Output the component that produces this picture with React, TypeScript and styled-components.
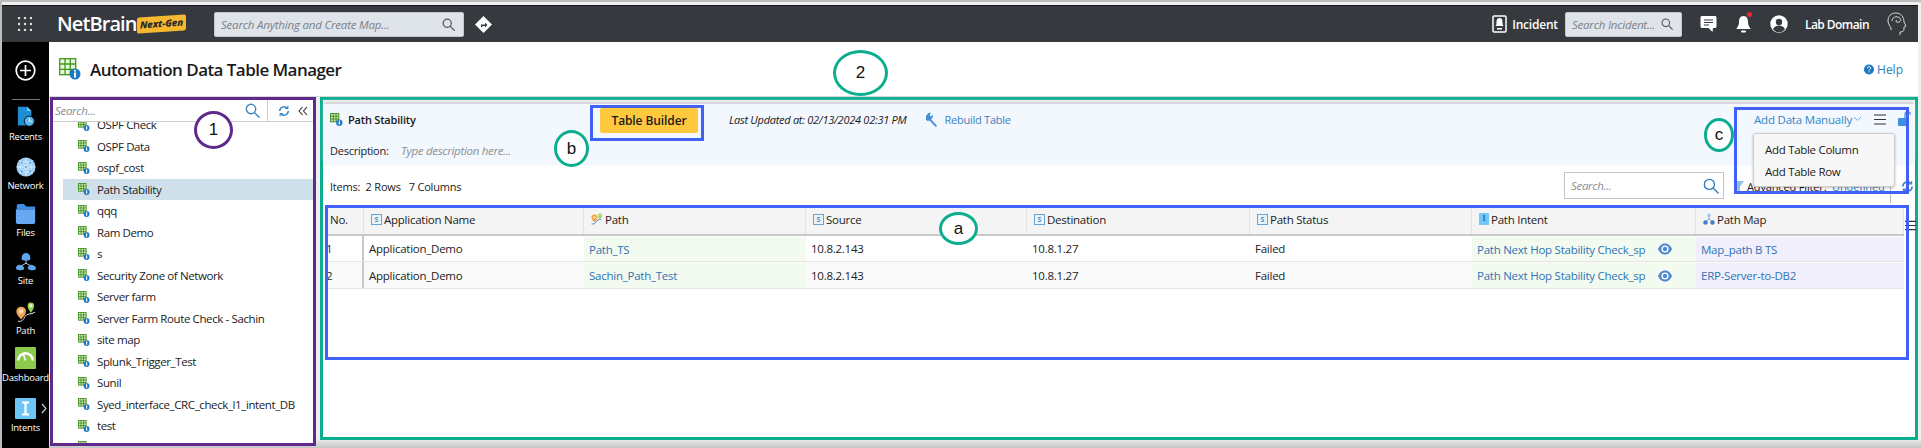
import React from "react";
import styled, { createGlobalStyle } from "styled-components";

const Global = createGlobalStyle`
  html, body { margin: 0; padding: 0; background: #efefef; overflow: hidden; }
  * { box-sizing: border-box; }
  body { font-family: "Open Sans", "Noto Sans", sans-serif; }
`;

const Page = styled.div`
  position: relative; width: 1921px; height: 448px; overflow: hidden;
  background: linear-gradient(#efefef, #efefef 438px, #c6c6c6 448px);
  padding: 5px 3px 0 2px; 
  &::before { content: ""; position: absolute; left: 0; right: 0; top: 0; height: 2px; background: #bdbdbd; }
  &::after { content: ""; position: absolute; left: 0; top: 0; bottom: 0; width: 2px; background: #bdbdbd; }
`;
const TopBar = styled.header`
  height: 37px; background: #363a3e; border-top: 1px solid #14171a; display: flex; align-items: center; color: #fff; padding-left: 16px;
`;
const Logo = styled.div`
  display: flex; align-items: center; margin-left: 25px; margin-right: 14px; width: 143px;
`;
const LogoWord = styled.span`
  font: 600 20px/1 "Open Sans", sans-serif; letter-spacing: -.9px; color: #fff; width: 80px; white-space: nowrap;
`;
const LogoBadge = styled.span`
  font: italic 800 9.5px/16px "Open Sans", sans-serif; color: #2b2b2b; background: #f5b82e; transform: skewY(-4deg); border-radius: 2px; white-space: nowrap; width: 49px; text-align: center; letter-spacing: -.1px;
`;
const TopSearch = styled.div<{ $w: number }>`
  width: ${p => p.$w}px; height: 25px; background: #dfe4ea; border-radius: 2px; border: 1px solid #c3c8ce; display: flex; align-items: center; justify-content: space-between; padding: 0 8px 0 6px; flex: none;
  font: italic 11.5px "Open Sans", sans-serif; color: #7b8188; letter-spacing: -.2px; white-space: nowrap;
`;
const Spacer = styled.div`flex: 1;`;
const EndGap = styled.div`flex: 0 0 11px;`;
const IncidentLabel = styled.span`font: 600 12px "Open Sans", sans-serif; margin: 0 7px 0 5px; letter-spacing: -.2px;`;
const TopIcon = styled.span<{ $ml: number }>`position: relative; display: inline-flex; margin-left: ${p => p.$ml}px;`;
const Dot = styled.span`position: absolute; width: 5px; height: 5px; border-radius: 50%; background: #f3232f; top: -3px; right: -1px;`;
const DomainLabel = styled.span`font: 600 12px "Open Sans", sans-serif; margin-left: 17px; letter-spacing: -.55px; white-space: nowrap;`;

const Body = styled.div`display: flex; height: 406px;`;
const Side = styled.nav`
  width: 47px; background: #000; color: #fff; display: flex; flex-direction: column; align-items: center; flex: none;
`;
const PlusWrap = styled.div`height: 57px; padding-top: 18px; width: 100%; display: flex; justify-content: center; border-bottom: 0;`;
const SideRule = styled.div`width: 28px; height: 1px; background: #777; flex: none; margin-bottom: 3px;`;
const SideItem = styled.div<{ $h: number }>`
  position: relative; height: ${p => p.$h}px; flex: none; width: 100%; display: flex; flex-direction: column; align-items: center; justify-content: flex-end;
`;
const SideLabel = styled.span`font: 400 9.5px/14px "Open Sans", sans-serif; color: #fff; letter-spacing: -.25px; white-space: nowrap; margin-top: 2px;`;
const SideArrow = styled.span`position: absolute; right: 2px; top: 18px; display: inline-flex;`;

const Main = styled.main`flex: 1; display: flex; flex-direction: column; min-width: 0;`;
const TitleBar = styled.div`
  height: 55px; background: #fff; display: flex; align-items: center; padding: 0 15px 0 10px; border-bottom: 1px solid #d8d8d8;
`;
const Title = styled.h1`
  font: 600 17px "Open Sans", sans-serif; margin: 0 0 0 9px; color: #1a1a1a; letter-spacing: -.55px; white-space: nowrap; flex: 1;
`;
const Help = styled.span`display: flex; align-items: center; gap: 3px; font: 400 12px "Open Sans", sans-serif; color: #2c7fb8;`;

const Content = styled.div`display: flex; flex: 1; min-height: 0; gap: 4px; margin-left: 1px;`;
const Left = styled.aside`
  width: 266px; height: 349px; flex: none; background: #fff; border: 3px solid #5f2a8c; display: flex; flex-direction: column; overflow: hidden;
`;
const LeftSearch = styled.div`
  height: 22px; flex: none; display: flex; align-items: center; border-bottom: 1px solid #ccc; background: #fff; position: relative; z-index: 1;
`;
const ItalicHint = styled.span<{ $flex?: boolean }>`
  font: italic 11.5px "Open Sans", sans-serif; color: #8a8f94; letter-spacing: -.3px; white-space: nowrap; ${p => p.$flex ? "flex: 1;" : ""}
`;
const LeftSearchInner = styled.div`flex: 1; height: 100%; display: flex; align-items: center; padding: 0 7px 0 2px; border-right: 1px solid #ccc;`;
const LeftTools = styled.div`width: 45px; flex: none; display: flex; align-items: center; justify-content: space-between; padding: 0 5px 0 10px;`;
const List = styled.div`margin-top: -8px; padding-left: 10px; flex: 1;`;
const ListRow = styled.div<{ $on?: boolean }>`
  height: 21.5px; display: flex; align-items: center; gap: 7px; padding-left: 15px; background: ${p => p.$on ? "#cfe0ea" : "transparent"};
  font: 400 11.5px "Open Sans", sans-serif; color: #222; letter-spacing: -.39px; white-space: nowrap;
`;

const Right = styled.section`
  width: 1598px; height: 343px; flex: none; background: #fff; border: 3px solid #0aae8e; display: flex; flex-direction: column; position: relative;
`;
const Banner = styled.div`
  height: 61px; margin-top: 4px; background: #f3f7fe; padding: 0 0 0 7px; position: relative; flex: none;
  box-shadow: 0 -4px 3px -1px #d2d4d8;
`;
const BannerTop = styled.div`height: 31px; display: flex; align-items: center; position: relative;`;
const TableName = styled.span`font: 600 11px "Open Sans", sans-serif; color: #1a1a1a; margin-left: 5px; letter-spacing: -.2px; width: 252px; white-space: nowrap;`;
const BuilderButton = styled.button`
  width: 98px; height: 25px; border: 0; border-radius: 2px; background: #ffc83d; color: #1b1b1b; font: 600 12px "Open Sans", sans-serif; padding: 0; letter-spacing: -.1px; margin-top: 2px;
`;
const Updated = styled.span`font: italic 11px "Open Sans", sans-serif; color: #1a1a1a; margin-left: 31px; letter-spacing: -.27px; white-space: nowrap;`;
const Rebuild = styled.span`display: flex; align-items: center; gap: 6px; margin-left: 19px; font: 400 11px "Open Sans", sans-serif; color: #3b80c4; letter-spacing: -.25px; white-space: nowrap;`;
const ActionGroup = styled.div`position: absolute; left: 1424px; top: 0; width: 160px; height: 30px; display: flex; align-items: center;`;
const AddData = styled.span`font: 400 11.5px "Open Sans", sans-serif; color: #2f86c9; white-space: nowrap; letter-spacing: -.2px; width: 99px;`;
const ActionGap = styled.span`width: 12px; flex: none;`;
const Menu = styled.div`
  position: absolute; left: -1px; top: 29px; width: 142px; height: 54px; background: #f7f7f7; border: 1px solid #cfcfcf; border-radius: 3px; box-shadow: 0 1px 3px rgba(0,0,0,.25); padding: 5px 0 0 11px; z-index: 3;
`;
const MenuItem = styled.div`font: 400 11.5px/21.5px "Open Sans", sans-serif; color: #1a1a1a; letter-spacing: -.3px; white-space: nowrap;`;
const DescRow = styled.div`display: flex; align-items: center; height: 18px; margin-top: 6px;`;
const DescLabel = styled.span`font: 400 11px "Open Sans", sans-serif; color: #222; letter-spacing: -.25px; width: 71px;`;

const ItemsBar = styled.div`height: 42px; flex: none; display: flex; align-items: center; padding-left: 7px; position: relative;`;
const Items = styled.span`font: 400 11px "Open Sans", sans-serif; color: #222; letter-spacing: -.2px; white-space: pre; flex: none; width: 1234px;`;
const GridSearch = styled.div`
  width: 160px; height: 27px; border: 1px solid #c4c4c4; background: #fff; display: flex; align-items: center; padding: 0 4px 0 6px; flex: none; margin-top: -1px;
`;
const Filter = styled.span`display: flex; align-items: center; gap: 3px; margin-left: 9px; font: 400 11px "Open Sans", sans-serif; color: #1a1a1a; letter-spacing: -.15px; white-space: nowrap; flex: none;`;
const Undefined = styled.span`color: #2f7fc0;`;
const Divider = styled.span`width: 1px; height: 26px; background: #bbb; margin-left: 5px; flex: none; margin-top: 8px;`;
const RefreshBox = styled.span`display: inline-flex; margin-left: 10px;`;

const TableBox = styled.div`margin-left: 3px; position: relative;`;
const Row = styled.div<{ $head?: boolean; $alt?: boolean }>`
  display: grid; grid-template-columns: 38px 220px 222px 221px 223px 222px 224px 208px;
  height: ${p => p.$head ? 29 : p.$alt ? 27 : 26}px;
  background: ${p => p.$head ? "#f4f4f4" : p.$alt ? "#fafafa" : "#fff"};
  border-bottom: ${p => p.$head ? "2px solid #c8c8c8" : "1px solid #e6e6e6"};
  width: 1578px;
`;
const HeadCell = styled.div<{ $pad?: number }>`
  display: flex; align-items: center; gap: 2px; padding: 0 0 3px ${p => p.$pad ?? 7}px; border-right: 1px solid #e2e2e2;
  font: 400 11.5px "Open Sans", sans-serif; color: #222; letter-spacing: -.25px; white-space: nowrap;
`;
const Cell = styled.div<{ $tone?: string; $link?: boolean; $pad?: number; $edge?: boolean }>`
  display: flex; align-items: center; padding-left: ${p => p.$pad ?? 5}px; background: ${p => p.$tone ?? "transparent"}; margin-top: ${p => p.$tone ? "1px" : 0};
  color: ${p => p.$link ? "#2f74b5" : "#222"}; font: 400 11.5px "Open Sans", sans-serif; letter-spacing: -.25px; white-space: nowrap; overflow: hidden;
  ${p => p.$edge ? "border-right: 2px solid #c8c8c8;" : ""}
`;
const TypeS = styled.span`
  width: 11px; height: 11px; border: 1px solid #6aa3cf; background: #eaf3fa; color: #4d8cc0; font: 700 7px/9px "Open Sans", sans-serif; text-align: center; display: inline-block; flex: none; letter-spacing: 0;
`;
const TypeI = styled.span`
  width: 10px; height: 12px; background: #73c9f5; color: #1d6ea8; font: 700 8px/12px "Liberation Serif", serif; text-align: center; display: inline-block; flex: none;
`;
const EyeSlot = styled.span`display: inline-flex; margin-left: 13px;`;
const ColMenu = styled.span`position: absolute; left: 1579px; top: 13px; display: inline-flex;`;

const Callout = styled.div<{ $x: number; $y: number; $w: number; $h: number }>`
  position: absolute; left: ${p => p.$x}px; top: ${p => p.$y}px; width: ${p => p.$w}px; height: ${p => p.$h}px; border: 3px solid #4060f6; z-index: 5; pointer-events: none;
`;
const Bubble = styled.div<{ $x: number; $y: number; $w: number; $h: number; $c: string }>`
  position: absolute; left: ${p => p.$x}px; top: ${p => p.$y}px; width: ${p => p.$w}px; height: ${p => p.$h}px; border: 3px solid ${p => p.$c}; border-radius: 50%; background: #fff; z-index: 6;
  display: flex; align-items: center; justify-content: center; font: 400 17px "Liberation Sans", sans-serif; color: #111;
`;

const TableIcon = ({ s = 12 }: { s?: number }) => (
  <svg width={s} height={s} viewBox="0 0 14 14" style={{ flex: "none" }}>
    <g fill="none" stroke="#3f8f1e" strokeWidth="1"><rect x=".5" y=".5" width="9" height="9" fill="#cfe8b8" /><path d="M3.5.5v9M6.5.5v9M.5 3.5h9M.5 6.5h9" /></g>
    <circle cx="10" cy="10.5" r="3.4" fill="#1f78c1" /><rect x="9.4" y="9.2" width="1.3" height="3.3" fill="#fff" /><rect x="9.4" y="7.9" width="1.3" height="1" fill="#fff" />
  </svg>
);
const Glass = ({ s = 14, c = "#555", w = 1.3 }: { s?: number; c?: string; w?: number }) => (
  <svg width={s} height={s} viewBox="0 0 14 14" fill="none" stroke={c} strokeWidth={w} style={{ flex: "none" }}><circle cx="5.6" cy="5.6" r="4.4" /><path d="M9 9l4.2 4.2" strokeLinecap="round" /></svg>
);
const Refresh = ({ s = 12 }: { s?: number }) => (
  <svg width={s} height={s} viewBox="0 0 14 14" fill="none" stroke="#2f86c9" strokeWidth="1.7"><path d="M2 7a5 5 0 0 1 8.6-3.4" /><path d="M12 7a5 5 0 0 1-8.6 3.4" /><path d="M11.5 1v3.2H8.3" strokeWidth="1.2" /><path d="M2.5 13V9.8h3.2" strokeWidth="1.2" /></svg>
);
const Burger = ({ w = 12 }: { w?: number }) => (
  <svg width={w} height="11" viewBox="0 0 12 11" stroke="#333" strokeWidth="1.1" style={{ flex: "none" }}><path d="M0 1h12M0 5.500h12M0 10h12" /></svg>
);
const PathGlyph = ({ s = 12 }: { s?: number }) => (
  <svg width={s} height={s} viewBox="0 0 24 24"><path d="M1 22c5 1 8-2 11-6s5-3 8-4" fill="none" stroke="#4d94d6" strokeWidth="2" /><path d="M7 19c-3-4-6-6-6-10a6 6 0 0 1 12 0c0 4-3 6-6 10z" fill="#f2a24a" /><circle cx="7" cy="9" r="2.6" fill="#fde3bf" /><path d="M18 12c-2-3-4-4-4-7a4 4 0 0 1 8 0c0 3-2 4-4 7z" fill="#8fce42" /><circle cx="18" cy="5" r="1.8" fill="#e4f5cc" /></svg>
);
const TreeGlyph = ({ s = 12 }: { s?: number }) => (
  <svg width={s} height={s} viewBox="0 0 12 12"><path d="M6 3v3M6 6L2.500 9M6 6l3.500 3" stroke="#8aa4bf" fill="none" /><circle cx="6" cy="2.500" r="2" fill="#a8cdee" /><circle cx="2.500" cy="9.500" r="2.200" fill="#3d7fca" /><circle cx="9.500" cy="9.500" r="2.200" fill="#3d7fca" /></svg>
);
const Eye = () => (
  <svg width="14" height="14" viewBox="0 0 14 14"><path d="M0 7c2-4 4-5.500 7-5.500S12 3 14 7c-2 4-4 5.500-7 5.500S2 11 0 7z" fill="#4f88d0" /><circle cx="7" cy="7" r="3.600" fill="#fff" /><circle cx="7" cy="7" r="2.200" fill="#4f88d0" /></svg>
);

const items = ["OSPF Check", "OSPF Data", "ospf_cost", "Path Stability", "qqq", "Ram Demo", "s", "Security Zone of Network", "Server farm", "Server Farm Route Check - Sachin", "site map", "Splunk_Trigger_Test", "Sunil", "Syed_interface_CRC_check_l1_intent_DB", "test", "test(1)"];

const rows = [
  { n: "1", path: "Path_TS", map: "Map_path B TS" },
  { n: "2", path: "Sachin_Path_Test", map: "ERP-Server-to-DB2" },
];

const nav: { label: string; h: number; icon: React.ReactNode; arrow?: boolean }[] = [
  { label: "Recents", h: 41, icon: <svg width="21" height="22" viewBox="0 0 24 26"><path d="M3 1h11l5 5v17H3z" fill="#1f8fd4" /><path d="M14 1l5 5h-5z" fill="#7cc7f1" /><circle cx="16.500" cy="18" r="6" fill="#5cb6ec" stroke="#000" /><path d="M16.500 14.500V18h3" stroke="#fff" fill="none" /></svg> },
  { label: "Network", h: 49, icon: <svg width="20" height="20" viewBox="0 0 24 24"><circle cx="12" cy="12" r="11.500" fill="#9dcdf3" /><g stroke="#e3f1fc" strokeWidth="1" fill="none"><path d="M1 12h22M12 1v22M4 4l16 16M20 4L4 20" /><circle cx="12" cy="12" r="6.500" /></g><g fill="#4c97da"><circle cx="7" cy="7" r="1.100" /><circle cx="17" cy="7" r="1.100" /><circle cx="7" cy="17" r="1.100" /><circle cx="17" cy="17" r="1.100" /><circle cx="12" cy="12" r="1.100" /></g></svg> },
  { label: "Files", h: 47, icon: <svg width="21" height="21" viewBox="0 0 24 24"><path d="M2 3c0-1 1-2 2-2h6l3 3h9c.6 0 1 .4 1 1v2H2z" fill="#3d8de6" /><path d="M1 7h22v15c0 1-1 2-2 2H3c-1 0-2-1-2-2z" fill="#66a8f2" /></svg> },
  { label: "Site", h: 48, icon: <svg width="22" height="21" viewBox="0 0 26 24"><path d="M13 10v4M13 14l-7 4M13 14l7 4" stroke="#dbe8f5" fill="none" /><path d="M8 7a5 5 0 0 1 10 0c1 3-1 4-5 4s-6-1-5-4z" fill="#5da4e8" /><path d="M1 20c0-3 3-5 5.500-4s5 2 4 5c0 2-9 2-9.500-1z" fill="#5da4e8" /><path d="M15 20c0-3 3-5 5.500-4s5 2 4 5c0 2-9 2-9.500-1z" fill="#5da4e8" /></svg> },
  { label: "Path", h: 50, icon: <svg width="22" height="21" viewBox="0 0 26 26"><path d="M3 25c5 1 7-2 9-6s7-2 12-5" fill="none" stroke="#e8f0f8" strokeWidth="1.200" /><path d="M7 23c-3-4-6-6-6-10a6 6 0 0 1 12 0c0 4-3 6-6 10z" fill="#f0a152" /><circle cx="7" cy="13" r="3" fill="#fbd9b0" /><path d="M19 15c-2-4-4-5-4-9a4 4 0 0 1 8 0c0 4-2 5-4 9z" fill="#92d050" /><circle cx="19" cy="6" r="2.200" fill="#e2f4cd" /></svg> },
  { label: "Dashboard", h: 47, icon: <svg width="21" height="22" viewBox="0 0 20 21"><rect width="20" height="21" rx="1" fill="#8dcb4f" /><path d="M3 13a7 7 0 0 1 14 0" fill="none" stroke="#fff" strokeWidth="2.400" /><path d="M10 13L8 7" stroke="#fff" strokeWidth="1.500" /></svg> },
  { label: "Intents", h: 50, arrow: true, icon: <svg width="21" height="21" viewBox="0 0 21 21"><rect width="21" height="21" rx="1" fill="#6cc5f7" /><path d="M7 4.500h7M7 16.500h7M10.500 4.500v12" stroke="#fff" strokeWidth="2.200" /></svg> },
];

export default function App() {
  return (
    <Page>
      <Global />
      <TopBar>
        <svg width="14" height="14" viewBox="0 0 14 14" fill="#e4e6e8"><g>{[1, 7, 13].flatMap(x => [1, 7, 13].map(y => <circle key={`${x}${y}`} cx={x} cy={y} r="1.200" />))}</g></svg>
        <Logo><LogoWord>NetBrain</LogoWord><LogoBadge>Next-Gen</LogoBadge></Logo>
        <TopSearch $w={250}>Search Anything and Create Map...<Glass s={13} /></TopSearch>
        <TopIcon $ml={11}><svg width="17" height="17" viewBox="0 0 17 17"><path d="M8.500 0L17 8.500 8.500 17 0 8.500z" fill="#fff" /><path d="M6 11V8.500h4V6.500l2.500 2.500-2.500 2.500V10H7.500v1z" fill="#363a3e" /></svg></TopIcon>
        <Spacer />
        <svg width="15" height="20" viewBox="0 0 15 20"><rect x="1" y="2" width="13" height="16" rx="1" fill="none" stroke="#fff" strokeWidth="1.500" /><path d="M7.500 4c-3 0-3 3-3 5s-1 3-1 3h8s-1-1-1-3 0-5-3-5z" fill="#fff" /><rect x="5" y="14" width="5" height="1.500" fill="#fff" /></svg>
        <IncidentLabel>Incident</IncidentLabel>
        <TopSearch $w={117}>Search Incident...<Glass s={12} /></TopSearch>
        <TopIcon $ml={18}><svg width="17" height="18" viewBox="0 0 17 18"><path d="M2 1h13c.8 0 1.500.7 1.500 1.500v9c0 .8-.7 1.500-1.500 1.500h-2l-.5 4-4-4H2c-.8 0-1.500-.7-1.500-1.500v-9C.5 1.700 1.200 1 2 1z" fill="#fff" /><path d="M4 5h9M4 7.500h9M4 10h5" stroke="#363a3e" /></svg></TopIcon>
        <TopIcon $ml={19}><svg width="15" height="19" viewBox="0 0 15 19"><path d="M7.500 1C4 1 3 4 3 7c0 4-2.500 6-2.500 7h14c0-1-2.500-3-2.500-7 0-3-1-6-4.500-6z" fill="#fff" /><rect x="5" y="15.500" width="5" height="2" rx="1" fill="#fff" /></svg><Dot /></TopIcon>
        <TopIcon $ml={19}><svg width="18" height="18" viewBox="0 0 18 18"><circle cx="9" cy="9" r="8.700" fill="#fff" /><circle cx="9" cy="7" r="3.200" fill="#363a3e" /><path d="M3 14.500c1-3 3.500-4 6-4s5 1 6 4a8 8 0 0 1-12 0z" fill="#363a3e" /></svg></TopIcon>
        <DomainLabel>Lab Domain</DomainLabel>
        <TopIcon $ml={18}><svg width="20" height="25" viewBox="0 0 20 25" fill="none" stroke="#d5d7d9" strokeWidth="1"><path d="M13 23v-3c3 0 4-1 4-3v-2l2-1-2-4c0-5-3-9-8-9S1 4 1 9c0 3 2 5 3 7v2" /><path d="M5 9c0-3 3-5 6-4s4 4 1 5-4-1-2-2" /></svg></TopIcon>
        <EndGap />
      </TopBar>
      <Body>
        <Side>
          <PlusWrap><svg width="21" height="21" viewBox="0 0 21 21" fill="none" stroke="#fff" strokeWidth="1.700"><circle cx="10.500" cy="10.500" r="9.300" /><path d="M10.500 5v11M5 10.500h11" /></svg></PlusWrap>
          <SideRule />
          {nav.map(n => (
            <SideItem key={n.label} $h={n.h}>
              {n.icon}
              <SideLabel>{n.label}</SideLabel>
              {n.arrow && <SideArrow><svg width="6" height="11" viewBox="0 0 6 11" fill="none" stroke="#ccc" strokeWidth="1.200"><path d="M1 1l4 4.500L1 10" /></svg></SideArrow>}
            </SideItem>
          ))}
        </Side>
        <Main>
          <TitleBar>
            <svg width="22" height="22" viewBox="0 0 22 22" style={{ flex: "none" }}><g fill="#e9f5dd" stroke="#3f9a17" strokeWidth="1.300"><rect x=".7" y=".7" width="16" height="16" /><path d="M6 .7v16M11.300.7v16M.7 6h16M.7 11.300h16" /></g><circle cx="16" cy="16" r="5.500" fill="#1f78c1" /><rect x="15" y="14.500" width="2" height="5" fill="#fff" /><rect x="15" y="12" width="2" height="1.600" fill="#fff" /></svg>
            <Title>Automation Data Table Manager</Title>
            <Help><svg width="10" height="11" viewBox="0 0 10 11"><circle cx="5" cy="5.500" r="5" fill="#1f78c1" /><path d="M3.500 4.200c0-2 3.200-2 3.200-.1 0 1.200-1.700 1.200-1.700 2.500" stroke="#fff" fill="none" strokeWidth="1" /><rect x="4.500" y="7.300" width="1" height="1" fill="#fff" /></svg>Help</Help>
          </TitleBar>
          <Content>
            <Left>
              <LeftSearch>
                <LeftSearchInner><ItalicHint $flex>Search...</ItalicHint><Glass s={15} c="#3a85c4" /></LeftSearchInner>
                <LeftTools><Refresh /><svg width="10" height="10" viewBox="0 0 10 10" fill="none" stroke="#333" strokeWidth="1.100"><path d="M4.500 1L1 5l3.500 4M9 1L5.500 5 9 9" /></svg></LeftTools>
              </LeftSearch>
              <List>
                {items.map(t => <ListRow key={t} $on={t === "Path Stability"}><TableIcon />{t}</ListRow>)}
              </List>
            </Left>
            <Right>
              <Banner>
                <BannerTop>
                  <TableIcon s={13} />
                  <TableName>Path Stability</TableName>
                  <BuilderButton>Table Builder</BuilderButton>
                  <Updated>Last Updated at: 02/13/2024 02:31 PM</Updated>
                  <Rebuild><svg width="13" height="15" viewBox="0 0 13 15" fill="#4a8ed6"><path d="M1 3a3 3 0 0 1 4-2L3.500 3 5 4.500 6.800 3a3 3 0 0 1-2 4l6 6.500c.5.500-.8 1.700-1.300 1.200L3.500 8.500A3 3 0 0 1 1 3z" /></svg>Rebuild Table</Rebuild>
                  <ActionGroup>
                    <AddData>Add Data Manually</AddData>
                    <svg width="9" height="6" viewBox="0 0 9 6" fill="none" stroke="#7aa8cf" strokeWidth="1" style={{ flex: "none" }}><path d="M1 1l3.500 3.500L8 1" /></svg>
                    <ActionGap />
                    <Burger />
                    <ActionGap />
                    <svg width="13" height="16" viewBox="0 0 13 16" style={{ flex: "none" }}><path d="M7 7V3.500a2.700 2.700 0 0 1 5.400 0" fill="none" stroke="#3d8fe0" strokeWidth="1.300" /><rect y="7" width="9" height="8" rx="1" fill="#3d8fe0" /></svg>
                    <Menu><MenuItem>Add Table Column</MenuItem><MenuItem>Add Table Row</MenuItem></Menu>
                  </ActionGroup>
                </BannerTop>
                <DescRow><DescLabel>Description:</DescLabel><ItalicHint>Type description here...</ItalicHint></DescRow>
              </Banner>
              <ItemsBar>
                <Items>Items:  2 Rows   7 Columns</Items>
                <GridSearch><ItalicHint $flex>Search...</ItalicHint><Glass s={16} c="#2f7fc0" w={1.2} /></GridSearch>
                <Filter><svg width="11" height="11" viewBox="0 0 11 11" fill="#8cc3ea"><path d="M0 0h11L7 5.500V11L4 9V5.500z" /></svg>Advanced Filter:&nbsp;<Undefined>Undefined</Undefined></Filter>
                <Divider />
                <RefreshBox><Refresh s={13} /></RefreshBox>
              </ItemsBar>
              <TableBox>
                <Row $head>
                  <HeadCell $pad={4}>No.</HeadCell>
                  <HeadCell><TypeS>S</TypeS>Application Name</HeadCell>
                  <HeadCell><PathGlyph />Path</HeadCell>
                  <HeadCell><TypeS>S</TypeS>Source</HeadCell>
                  <HeadCell><TypeS>S</TypeS>Destination</HeadCell>
                  <HeadCell><TypeS>S</TypeS>Path Status</HeadCell>
                  <HeadCell><TypeI>I</TypeI>Path Intent</HeadCell>
                  <HeadCell><TreeGlyph />Path Map</HeadCell>
                </Row>
                {rows.map((r, i) => (
                  <Row key={r.n} $alt={i === 1}>
                    <Cell $edge $pad={0}>{r.n}</Cell>
                    <Cell>Application_Demo</Cell>
                    <Cell $tone="#f3faf0" $link>{r.path}</Cell>
                    <Cell>10.8.2.143</Cell>
                    <Cell>10.8.1.27</Cell>
                    <Cell>Failed</Cell>
                    <Cell $tone="#f3faf0" $link>Path Next Hop Stability Check_sp<EyeSlot><Eye /></EyeSlot></Cell>
                    <Cell $tone="#f0effb" $link>{r.map}</Cell>
                  </Row>
                ))}
                <ColMenu><Burger w={11} /></ColMenu>
              </TableBox>
            </Right>
          </Content>
        </Main>
      </Body>
      <Callout $x={325} $y={205} $w={1584} $h={155} />
      <Callout $x={590} $y={105} $w={114} $h={36} />
      <Callout $x={1734} $y={107} $w={175} $h={87} />
      <Bubble $x={194} $y={111} $w={39} $h={38} $c="#5f2a8c">1</Bubble>
      <Bubble $x={833} $y={50} $w={55} $h={46} $c="#0aae8e">2</Bubble>
      <Bubble $x={554} $y={130} $w={35} $h={37} $c="#0aae8e">b</Bubble>
      <Bubble $x={939} $y={212} $w={39} $h={33} $c="#0aae8e">a</Bubble>
      <Bubble $x={1704} $y={118} $w={30} $h={34} $c="#0aae8e">c</Bubble>
    </Page>
  );
}
